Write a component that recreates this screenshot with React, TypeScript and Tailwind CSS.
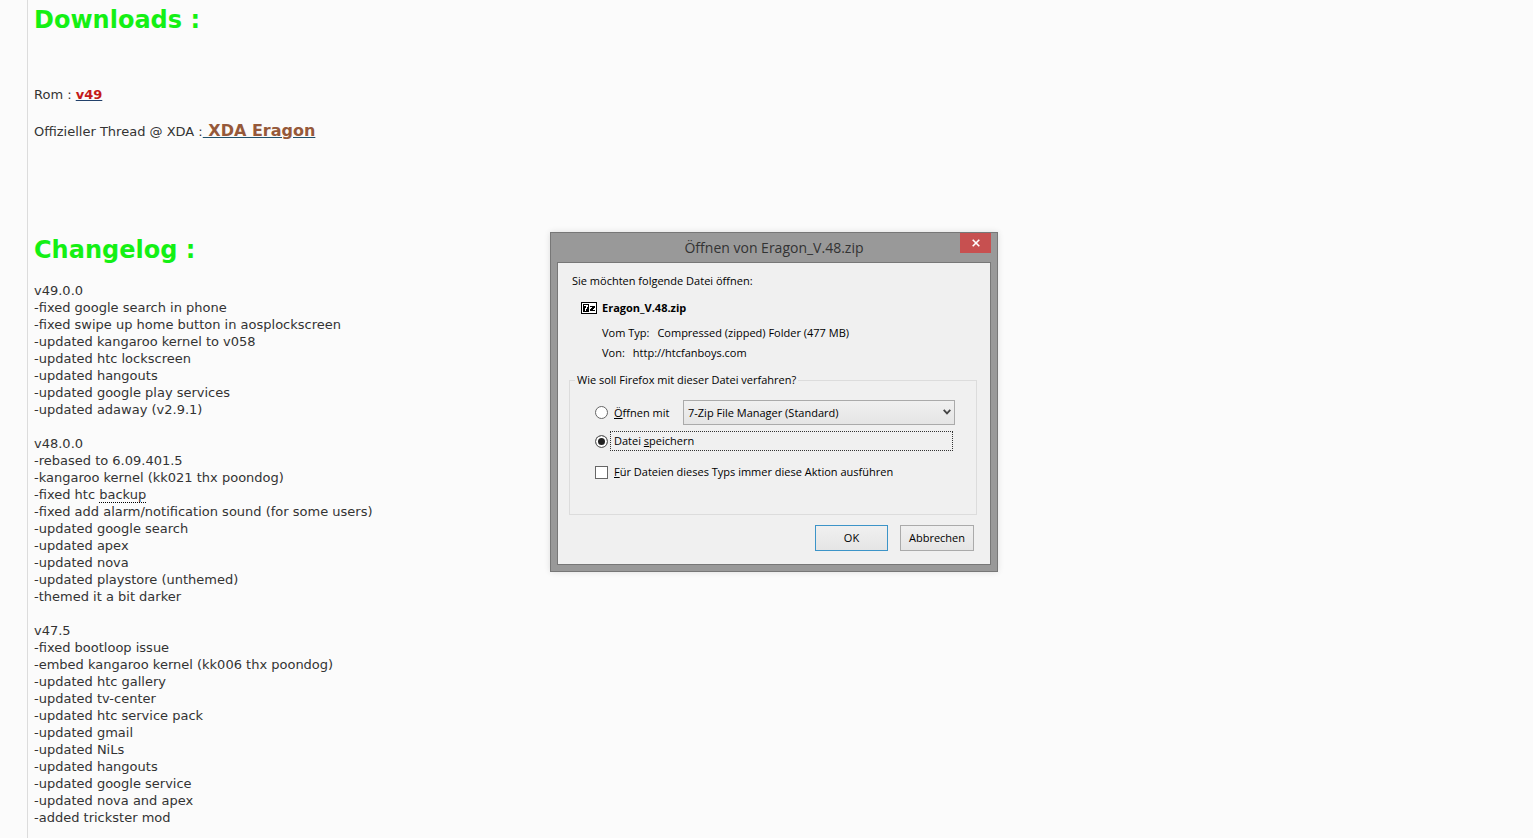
import { useState } from 'react';

type Release = {
  version: string;
  changes: string[];
};

const releases: Release[] = [
  {
    version: 'v49.0.0',
    changes: [
      'fixed google search in phone',
      'fixed swipe up home button in aosplockscreen',
      'updated kangaroo kernel to v058',
      'updated htc lockscreen',
      'updated hangouts',
      'updated google play services',
      'updated adaway (v2.9.1)',
    ],
  },
  {
    version: 'v48.0.0',
    changes: [
      'rebased to 6.09.401.5',
      'kangaroo kernel (kk021 thx poondog)',
      'fixed htc backup',
      'fixed add alarm/notification sound (for some users)',
      'updated google search',
      'updated apex',
      'updated nova',
      'updated playstore (unthemed)',
      'themed it a bit darker',
    ],
  },
  {
    version: 'v47.5',
    changes: [
      'fixed bootloop issue',
      'embed kangaroo kernel (kk006 thx poondog)',
      'updated htc gallery',
      'updated tv-center',
      'updated htc service pack',
      'updated gmail',
      'updated NiLs',
      'updated hangouts',
      'updated google service',
      'updated nova and apex',
      'added trickster mod',
    ],
  },
];

function Change({ text }: { text: string }) {
  if (text.endsWith(' backup')) {
    return (
      <li>
        -{text.replace('backup', '')}
        <span className="border-b border-dotted border-black">backup</span>
      </li>
    );
  }
  return <li>-{text}</li>;
}

function Post() {
  return (
    <main className="ml-[27px] min-h-screen border-l border-[#dcdcdc] px-1.5 pt-[5px] pb-3 text-[13px] leading-[17px] text-[#333]">
      <h1 className="text-2xl leading-[30px] font-bold text-[#14f014]">Downloads :</h1>
      <p className="mt-[51px]">
        Rom :{' '}
        <a href="#v49" className="font-bold text-[#c41a1a] underline decoration-[#22406a]">
          v49
        </a>
      </p>
      <p className="mt-[17px] leading-[22px]">
        Offizieller Thread @ XDA :
        <a href="#xda" className="text-base leading-[22px] font-bold whitespace-pre text-[#96593a] underline decoration-[#22506a]">
          {' XDA Eragon'}
        </a>
      </p>

      <h1 className="mt-[92px] text-2xl leading-[30px] font-bold text-[#14f014]">Changelog :</h1>
      <div className="mt-[17px] flex flex-col gap-[17px]">
        {releases.map((release) => (
          <section key={release.version}>
            <h2>{release.version}</h2>
            <ul>
              {release.changes.map((change) => (
                <Change key={change} text={change} />
              ))}
            </ul>
          </section>
        ))}
      </div>
    </main>
  );
}

function ZipIcon() {
  return (
    <svg width="16" height="12" viewBox="0 0 16 12" shapeRendering="crispEdges" aria-hidden="true">
      <rect width="16" height="12" fill="#000" />
      <rect x="1" y="1" width="14" height="10" fill="#fff" />
      <rect x="2" y="2" width="6" height="8" fill="#000" />
      <path d="M3 3h4v2h-1v2h-1v2h-1v-3h1v-2h-2z" fill="#fff" />
      <path d="M9 4h5v2h-1v1h-1v1h2v1h-5v-2h1v-1h1v-1h-2z" fill="#000" />
    </svg>
  );
}

function DownloadDialog() {
  const [action, setAction] = useState('save');
  const radio =
    'size-[13px] shrink-0 appearance-none rounded-full border border-[#666] bg-white checked:bg-[#222] checked:shadow-[inset_0_0_0_2px_#fff]';
  const button =
    'h-[26px] border bg-linear-to-b from-[#f0f0f0] to-[#e5e5e5] text-center';

  return (
    <div
      role="dialog"
      aria-labelledby="dialog-title"
      className="absolute top-[232px] left-[550px] w-[448px] border border-[#777] bg-[#999] px-1.5 pb-1.5 font-['Open_Sans','Noto_Sans',sans-serif] text-[11px] leading-4 text-black shadow-[0_0_6px_rgba(0,0,0,0.12)]"
    >
      <header className="relative flex h-[29px] items-center justify-center">
        <h2 id="dialog-title" className="text-sm text-[#333]">
          Öffnen von Eragon_V.48.zip
        </h2>
        <button
          type="button"
          aria-label="Schließen"
          className="absolute top-0 right-0 flex h-5 w-[31px] items-center justify-center bg-[#c75050]"
        >
          <svg width="8" height="8" viewBox="0 0 8 8" aria-hidden="true">
            <path d="M0.7 0.7l6.6 6.6M7.3 0.7L0.7 7.3" stroke="#fff" strokeWidth="1.6" />
          </svg>
        </button>
      </header>

      <form className="border border-[#777] bg-[#f0f0f0] pt-2.5 pr-[13px] pb-[13px] pl-[11px]">
        <p className="pl-[3px]">Sie möchten folgende Datei öffnen:</p>
        <div className="mt-[11px] flex items-center gap-[5px] pl-3 font-bold">
          <ZipIcon />
          Eragon_V.48.zip
        </div>
        <dl className="mt-[9px] flex flex-col gap-1 pl-[33px]">
          <div className="flex gap-2">
            <dt>Vom Typ:</dt>
            <dd>Compressed (zipped) Folder (477 MB)</dd>
          </div>
          <div className="flex gap-2">
            <dt>Von:</dt>
            <dd>http://htcfanboys.com</dd>
          </div>
        </dl>

        <fieldset className="mt-[11px] border border-[#dcdcdc] pr-[21px] pb-[34px] pl-[25px]">
          <legend className="-ml-5 px-0.5">Wie soll Firefox mit dieser Datei verfahren?</legend>
          <div className="flex items-center pt-3">
            <input
              id="open"
              type="radio"
              name="action"
              checked={action === 'open'}
              onChange={() => setAction('open')}
              className={radio}
            />
            <label htmlFor="open" className="w-[75px] pl-1.5 whitespace-nowrap">
              <u>Ö</u>ffnen mit
            </label>
            <div className="relative flex-1">
              <select
                aria-label="Programm"
                className="block h-[25px] w-full appearance-none border border-[#aaa] bg-linear-to-b from-[#f0f0f0] to-[#e5e5e5] px-1"
              >
                <option>7-Zip File Manager (Standard)</option>
              </select>
              <svg
                width="8"
                height="6"
                viewBox="0 0 8 6"
                className="pointer-events-none absolute top-[9px] right-1"
                aria-hidden="true"
              >
                <path d="M0.7 0.8L4 4.4l3.3-3.6" fill="none" stroke="#444" strokeWidth="1.8" />
              </svg>
            </div>
          </div>
          <div className="mt-1.5 flex items-center pr-0.5">
            <input
              id="save"
              type="radio"
              name="action"
              checked={action === 'save'}
              onChange={() => setAction('save')}
              className={radio}
            />
            <label htmlFor="save" className="ml-0.5 flex-1 border border-dotted border-[#333] px-[3px] py-px">
              Datei <u>s</u>peichern
            </label>
          </div>
          <div className="mt-[13px] flex items-center">
            <input
              id="always"
              type="checkbox"
              className="size-[13px] shrink-0 appearance-none border border-[#666] bg-white checked:bg-[#222] checked:shadow-[inset_0_0_0_2px_#fff]"
            />
            <label htmlFor="always" className="pl-1.5 whitespace-nowrap">
              <u>F</u>ür Dateien dieses Typs immer diese Aktion ausführen
            </label>
          </div>
        </fieldset>

        <div className="mt-2.5 flex justify-end gap-3 pr-[3px]">
          <button type="button" className={`${button} w-[73px] border-[#3c94c8]`}>
            OK
          </button>
          <button type="button" className={`${button} w-[74px] border-[#aaa]`}>
            Abbrechen
          </button>
        </div>
      </form>
    </div>
  );
}

export default function App() {
  return (
    <div className="relative min-h-screen bg-[#fbfbfb] font-['DejaVu_Sans',sans-serif]">
      <Post />
      <DownloadDialog />
    </div>
  );
}
